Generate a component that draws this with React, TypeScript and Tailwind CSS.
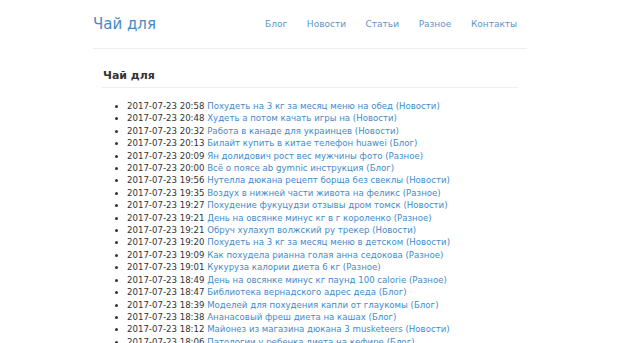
const navLinks = ["Блог", "Новости", "Статьи", "Разное", "Контакты"];

const posts: [string, string, string][] = [
  ["2017-07-23 20:58", "Похудеть на 3 кг за месяц меню на обед", "Новости"],
  ["2017-07-23 20:48", "Худеть а потом качать игры на", "Новости"],
  ["2017-07-23 20:32", "Работа в канаде для украинцев", "Новости"],
  ["2017-07-23 20:13", "Билайт купить в китае телефон huawei", "Блог"],
  ["2017-07-23 20:09", "Ян долидович рост вес мужчины фото", "Разное"],
  ["2017-07-23 20:00", "Всё о поясе ab gymnic инструкция", "Блог"],
  ["2017-07-23 19:56", "Нутелла дюкана рецепт борща без свеклы", "Новости"],
  ["2017-07-23 19:35", "Воздух в нижней части живота на феликс", "Разное"],
  ["2017-07-23 19:27", "Похудение фукуцудзи отзывы дром томск", "Новости"],
  ["2017-07-23 19:21", "День на овсянке минус кг в г короленко", "Разное"],
  ["2017-07-23 19:21", "Обруч хулахуп волжский ру трекер", "Новости"],
  ["2017-07-23 19:20", "Похудеть на 3 кг за месяц меню в детском", "Новости"],
  ["2017-07-23 19:09", "Как похудела рианна голая анна седокова", "Разное"],
  ["2017-07-23 19:01", "Кукуруза калории диета 6 кг", "Разное"],
  ["2017-07-23 18:49", "День на овсянке минус кг паунд 100 calorie", "Разное"],
  ["2017-07-23 18:47", "Библиотека вернадского адрес деда", "Блог"],
  ["2017-07-23 18:39", "Моделей для похудения капли от глаукомы", "Блог"],
  ["2017-07-23 18:38", "Ананасовый фреш диета на кашах", "Блог"],
  ["2017-07-23 18:12", "Майонез из магазина дюкана 3 musketeers", "Новости"],
  ["2017-07-23 18:06", "Патологии у ребенка диета на кефире", "Блог"],
];

export default function App() {
  return (
    <div className="min-h-screen bg-white font-['DejaVu_Sans',sans-serif] text-[8.6px] leading-[12.4px] text-[#333]">
      <div className="mx-[93px] w-[434px]">
        <header className="flex h-[49px] items-center justify-between border-b border-[#eeeeee]">
          <a className="text-[15px] leading-[20px] text-[#428bca]">Чай для</a>
          <nav className="flex">
            {navLinks.map((l) => (
              <a key={l} className="px-[9.8px] text-[9px] leading-[12.4px] text-[#5a95d0]">
                {l}
              </a>
            ))}
          </nav>
        </header>

        <main className="px-[9px]">
          <h2 className="flex h-[39px] items-end border-b border-[#eeeeee] pb-[4px] pl-[1px] text-[11px] font-bold leading-[14px] text-[#333]">
            Чай для
          </h2>
          <ul className="mt-[12px] list-disc pl-[25px]">
            {posts.map(([date, title, cat], i) => (
              <li key={i} className="whitespace-nowrap">
                {date} <a className="text-[#428bca]">{title}</a>{" "}
                <a className="text-[#428bca]">({cat})</a>
              </li>
            ))}
          </ul>
        </main>
      </div>
    </div>
  );
}
